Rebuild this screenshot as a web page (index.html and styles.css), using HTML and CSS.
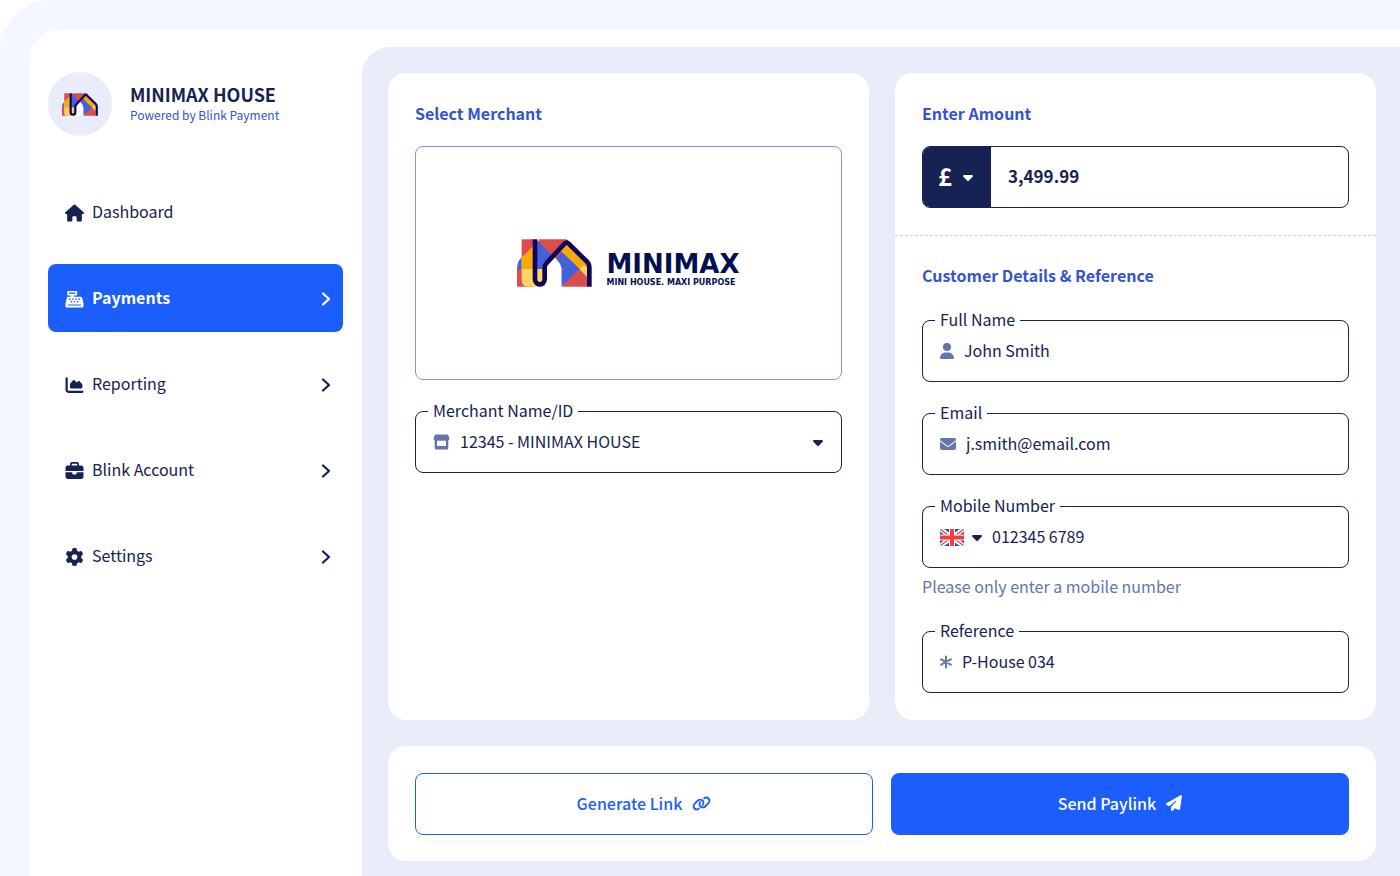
FILE: index.html
```html
<!DOCTYPE html>
<html lang="en">
<head>
<meta charset="utf-8">
<meta name="viewport" content="width=device-width, initial-scale=1">
<title>Minimax House - Payments</title>
<link rel="stylesheet" href="styles.css">
</head>
<body>
<svg class="sprite" aria-hidden="true">
  <symbol id="mark" viewBox="0 0 225 142">
    <path fill="#dd4d4b" d="M14 0h34v22L14 56zM0 89h48v53H0z"/>
    <path fill="#4361d8" d="M14 54v35H0q0-23 14-35z"/>
    <path fill="#fba706" d="M14 55l34-34v68H14z"/>
    <path fill="#fed563" d="M14 89h69v53H34q-20 0-20-20z"/>
    <path fill="#dd4d4b" d="M66 0h83l17 16-50 50L62 12z"/>
    <path fill="#4361d8" d="M54 3h6l57 57 32-44 60 60-76 66V92q0-14-11-26l-10-11-29 30v4H54z"/>
    <path fill="#fff" d="M90 142V84l22-31 10 11q11 12 11 26v52z"/>
    <path fill="#fba706" d="M131 34l18-20 61 60v15l-22 0z"/>
    <path fill="#fed563" d="M188 90l13-12 9 8v28z"/>
    <path fill="#dd4d4b" d="M134 142l53-53 23 23v30z"/>
    <path fill="none" stroke="#0f065c" stroke-width="14" stroke-linejoin="round" d="M54 0v120c0 20 29 20 29 0V84q0-8 7-14l50-54q9-12 18 0l53 52q6 6 6 14v60"/>
  </symbol>
  <symbol id="caret" viewBox="0 0 320 192"><path d="M137.400 182.600c12.500 12.500 32.800 12.500 45.300 0l128-128c9.200-9.200 11.900-22.900 6.900-34.900S301 0 288 0H32C19 0 7.400 7.800 2.400 19.800s-2.200 25.700 6.900 34.900z"/></symbol>
  <symbol id="chevron" viewBox="0 0 10 16"><path fill="none" stroke="currentColor" stroke-width="2.300" stroke-linecap="round" stroke-linejoin="round" d="M2 2.500L8 8l-6 5.500"/></symbol>
</svg>
<div class="shell">
  <div class="window">
    <aside class="sidebar">
      <div class="brand">
        <span class="avatar"><svg class="avatar-mark"><use href="#mark"/></svg></span>
        <div>
          <div class="brand-name">MINIMAX HOUSE</div>
          <div class="brand-sub">Powered by Blink Payment</div>
        </div>
      </div>
      <nav class="nav">
        <a class="nav-item" href="#dashboard">
          <svg class="nav-icon" viewBox="0 0 576 512"><path d="M575.8 255.500c0 18-15 32.100-32 32.100h-32l.7 160.200c0 2.700-.2 5.400-.5 8.100V472c0 22.100-17.900 40-40 40H392c-22.100 0-40-17.900-40-40v-88c0-17.700-14.300-32-32-32h-64c-17.700 0-32 14.300-32 32v88c0 22.100-17.900 40-40 40h-80c-22.100 0-40-17.900-40-40V287.600H32c-18 0-32-14-32-32.100 0-9 3-17 10-24L266.400 8c7-7 15-8 22-8s15 2 21 7l255.400 224.500c8 7 12 15 11 24z"/></svg>
          <span class="nav-label">Dashboard</span>
        </a>
        <a class="nav-item nav-item-active" href="#payments" aria-current="page">
          <svg class="nav-icon" viewBox="0 0 20 20"><path fill-rule="evenodd" d="M3 1h9q1 0 1 1v3q0 1-1 1H9v1.500h8q1.200 0 1.500 1.200L20 15v3q0 1.500-1.500 1.500h-17Q0 19.500 0 18v-3l1.500-6.300Q1.800 7.500 3 7.500h3V6H3Q2 6 2 5V2q0-1 1-1zm.8 1.700v1.600h7.400V2.700zM4 9.500V11h1.500V9.500zm3.500 0V11H9V9.500zm3.500 0V11h1.500V9.500zm3.500 0V11H16V9.500zM5.700 12.300v1.500h1.500v-1.500zm3.500 0v1.500h1.500v-1.500zm3.500 0v1.500h1.500v-1.500zM2.800 16v1.300h14.400V16z"/></svg>
          <span class="nav-label">Payments</span>
          <svg class="chevron"><use href="#chevron"/></svg>
        </a>
        <a class="nav-item" href="#reporting">
          <svg class="nav-icon" viewBox="0 0 512 512"><path d="M64 64c0-17.700-14.300-32-32-32S0 46.300 0 64v336c0 44.200 35.800 80 80 80h400c17.700 0 32-14.300 32-32s-14.300-32-32-32H80c-8.800 0-16-7.200-16-16V64zm96 288h288c17.700 0 32-14.300 32-32v-68.200c0-7.600-2.700-15-7.700-20.800l-65.800-76.800c-12.100-14.200-33.700-15-46.900-1.800l-21 21c-10 10-26.400 9.200-35.400-1.600l-39.200-47c-12.600-15.100-35.700-15.400-48.700-.6L135.900 215c-5.100 5.800-7.900 13.300-7.900 21.100v84c0 17.700 14.300 32 32 32z"/></svg>
          <span class="nav-label">Reporting</span>
          <svg class="chevron"><use href="#chevron"/></svg>
        </a>
        <a class="nav-item" href="#account">
          <svg class="nav-icon" viewBox="0 0 512 512"><path d="M184 48h144c4.400 0 8 3.600 8 8v40H176V56c0-4.400 3.600-8 8-8zm-56 8v40H64c-35.300 0-64 28.700-64 64v96h512v-96c0-35.300-28.700-64-64-64h-64V56c0-30.900-25.100-56-56-56H184c-30.900 0-56 25.100-56 56zm384 232H320v32c0 17.700-14.300 32-32 32h-64c-17.700 0-32-14.300-32-32v-32H0v128c0 35.300 28.700 64 64 64h384c35.300 0 64-28.700 64-64V288z"/></svg>
          <span class="nav-label">Blink Account</span>
          <svg class="chevron"><use href="#chevron"/></svg>
        </a>
        <a class="nav-item" href="#settings">
          <svg class="nav-icon" viewBox="0 0 512 512"><path d="M495.900 166.600c3.200 8.700.5 18.400-6.400 24.600l-43.300 39.400c1.100 8.300 1.700 16.800 1.700 25.400s-.6 17.100-1.700 25.400l43.300 39.400c6.900 6.200 9.600 15.900 6.400 24.600-4.400 11.900-9.700 23.300-15.800 34.300l-4.700 8.100c-6.600 11-14 21.400-22.100 31.200-5.900 7.200-15.700 9.600-24.500 6.800l-55.700-17.700c-13.400 10.300-28.200 18.900-44 25.400l-12.500 57.100c-2 9.100-9 16.300-18.200 17.800-13.800 2.300-28 3.500-42.500 3.500s-28.700-1.200-42.500-3.500c-9.200-1.500-16.200-8.700-18.200-17.800l-12.500-57.100c-15.800-6.500-30.600-15.100-44-25.400l-55.600 17.800c-8.800 2.800-18.600.3-24.500-6.800-8.100-9.800-15.500-20.200-22.100-31.200l-4.700-8.100c-6.100-11-11.400-22.400-15.800-34.300-3.200-8.700-.5-18.400 6.400-24.600l43.300-39.400C64.600 273.100 64 264.600 64 256s.6-17.100 1.700-25.400l-43.300-39.400c-6.900-6.200-9.600-15.900-6.400-24.600 4.400-11.900 9.700-23.300 15.800-34.300l4.700-8.100c6.600-11 14-21.400 22.100-31.200 5.900-7.200 15.700-9.600 24.500-6.800l55.700 17.700c13.400-10.300 28.200-18.900 44-25.400l12.500-57.100c2-9.100 9-16.300 18.200-17.800C227.300 1.200 241.500 0 256 0s28.700 1.200 42.500 3.500c9.200 1.500 16.200 8.700 18.200 17.800l12.500 57.100c15.800 6.500 30.600 15.100 44 25.400l55.700-17.700c8.800-2.800 18.600-.3 24.500 6.800 8.100 9.800 15.500 20.200 22.100 31.200l4.700 8.100c6.100 11 11.400 22.400 15.800 34.300zM256 336a80 80 0 1 0 0-160 80 80 0 1 0 0 160z"/></svg>
          <span class="nav-label">Settings</span>
          <svg class="chevron"><use href="#chevron"/></svg>
        </a>
      </nav>
    </aside>

    <main class="main">
      <div class="columns">
        <section class="card">
          <div class="section">
            <h2 class="heading">Select Merchant</h2>
            <div class="merchant-logo">
              <svg class="merchant-mark"><use href="#mark"/></svg>
              <div class="wordmark">
                <div class="wordmark-name">MINIMAX</div>
                <div class="wordmark-tag">MINI HOUSE. MAXI PURPOSE</div>
              </div>
            </div>
            <div class="field">
              <label class="field-label" for="merchant">Merchant Name/ID</label>
              <svg class="field-icon field-icon-store" viewBox="0 0 17 16"><path fill-rule="evenodd" d="M3 .5h11q.8 0 1.200.7l1 2.300q.8 2.300-.9 3V14q0 1.500-1.500 1.500H3.200Q1.700 15.500 1.700 14V6.500q-1.700-.7-.9-3l1-2.300Q2.200.5 3 .5zM4 6.900v5h9v-5q-1 0-1.700-.7-.6.700-1.500.7t-1.300-.7q-.5.700-1.300.7t-1.500-.7Q5 6.900 4 6.900z"/></svg>
              <select class="control" id="merchant"><option>12345 - MINIMAX HOUSE</option></select>
              <svg class="caret"><use href="#caret"/></svg>
            </div>
          </div>
        </section>

        <section class="card">
          <div class="section">
            <h2 class="heading">Enter Amount</h2>
            <div class="amount">
              <div class="currency">
                <select class="currency-select" aria-label="Currency"><option>£</option></select>
                <svg class="caret"><use href="#caret"/></svg>
              </div>
              <input class="amount-input" type="text" inputmode="decimal" aria-label="Amount" value="3,499.99">
            </div>
          </div>
          <div class="section section-divided">
            <h2 class="heading">Customer Details &amp; Reference</h2>
            <div class="fields">
              <div class="field">
                <label class="field-label" for="name">Full Name</label>
                <svg class="field-icon field-icon-user" viewBox="0 0 448 512"><path d="M224 256a128 128 0 1 0 0-256 128 128 0 1 0 0 256zm-45.700 48C79.800 304 0 383.800 0 482.300 0 498.700 13.300 512 29.700 512h388.600c16.400 0 29.700-13.300 29.700-29.700 0-98.500-79.800-178.300-178.300-178.300h-91.400z"/></svg>
                <input class="control" id="name" type="text" value="John Smith">
              </div>
              <div class="field">
                <label class="field-label" for="email">Email</label>
                <svg class="field-icon" viewBox="0 0 512 512"><path d="M48 64C21.500 64 0 85.500 0 112c0 15.100 7.100 29.300 19.200 38.400l217.600 163.200c11.400 8.500 27 8.500 38.400 0l217.600-163.200c12.100-9.100 19.200-23.300 19.200-38.400 0-26.500-21.500-48-48-48H48zM0 176v208c0 35.300 28.700 64 64 64h384c35.300 0 64-28.700 64-64V176L294.400 339.200c-22.800 17.100-54 17.100-76.800 0L0 176z"/></svg>
                <input class="control" id="email" type="email" value="j.smith@email.com">
              </div>
              <div>
                <div class="field">
                  <label class="field-label" for="mobile">Mobile Number</label>
                  <button class="country" type="button" aria-label="Country code, United Kingdom">
                    <svg class="flag" viewBox="0 0 24 17">
                      <rect width="24" height="17" rx="1.500" fill="#fff"/>
                      <path fill="#2a50b0" d="M4 0h5v3.500zM15 0h5l-5 3.500zM0 2.500L4.500 6H0zM24 2.500L19.500 6H24zM4 17h5v-3.500zM15 17h5l-5-3.500zM0 14.500L4.500 11H0zM24 14.500L19.500 11H24z"/>
                      <path stroke="#fb3b3b" stroke-width="1.300" d="M.5.500L8 6M23.500.500L16 6M.5 16.500L8 11M23.500 16.500L16 11"/>
                      <path fill="#fff" d="M9 0h6v17H9zM0 5.500h24v6H0z"/>
                      <path fill="#fb3b3b" d="M10 0h4v17h-4zM0 6.500h24v4H0z"/>
                    </svg>
                    <svg class="caret"><use href="#caret"/></svg>
                  </button>
                  <input class="control" id="mobile" type="tel" value="012345 6789" aria-describedby="mobile-hint">
                </div>
                <p class="hint" id="mobile-hint">Please only enter a mobile number</p>
              </div>
              <div class="field">
                <label class="field-label" for="reference">Reference</label>
                <svg class="field-icon field-icon-star" viewBox="0 0 12 16"><path fill="none" stroke="currentColor" stroke-width="2" stroke-linecap="round" d="M6 2.500v11M1.200 5.300l9.600 5.400M10.800 5.300l-9.600 5.400"/></svg>
                <input class="control" id="reference" type="text" value="P-House 034">
              </div>
            </div>
          </div>
        </section>
      </div>

      <div class="card actions">
        <button class="button button-outline" type="button">Generate Link
          <svg class="link-icon" viewBox="0 0 640 512"><path d="M579.800 267.700c56.500-56.500 56.500-148 0-204.500-50-50-128.800-56.500-186.300-15.400l-1.600 1.100c-14.400 10.300-17.700 30.300-7.400 44.600s30.300 17.700 44.600 7.400l1.600-1.100c32.100-22.900 76-19.300 103.800 8.600 31.500 31.500 31.500 82.500 0 114L422.300 334.800c-31.500 31.500-82.500 31.500-114 0-27.900-27.900-31.500-71.800-8.600-103.800l1.100-1.600c10.300-14.400 6.900-34.400-7.400-44.600s-34.400-6.900-44.600 7.400l-1.100 1.600C206.500 251.200 213 330 263 380c56.500 56.500 148 56.500 204.500 0l112.300-112.300zM60.200 244.300c-56.500 56.500-56.500 148 0 204.500 50 50 128.800 56.500 186.300 15.400l1.600-1.100c14.400-10.300 17.700-30.300 7.400-44.600s-30.300-17.700-44.600-7.400l-1.600 1.100c-32.100 22.900-76 19.300-103.800-8.600C74 372 74 321 105.500 289.500l112.200-112.300c31.500-31.500 82.500-31.500 114 0 27.900 27.900 31.500 71.800 8.600 103.900l-1.100 1.600c-10.300 14.400-6.900 34.400 7.400 44.600s34.400 6.900 44.600-7.400l1.100-1.600C433.500 260.800 427 182 377 132c-56.500-56.500-148-56.500-204.500 0L60.200 244.300z"/></svg>
        </button>
        <button class="button button-solid" type="button">Send Paylink
          <svg class="send-icon" viewBox="0 0 512 512"><path d="M498.100 5.600c10.100 7 15.400 19.100 13.500 31.200l-64 416c-1.500 9.700-7.400 18.200-16 23s-18.900 5.400-28 1.600L284 427.700l-68.500 74.100c-8.900 9.700-22.900 12.900-35.200 8.100S160 493.200 160 480v-83.600c0-4 1.500-7.800 4.200-10.700l167.600-182.900c5.800-6.300 5.600-16-.4-22s-15.700-6.400-22-.7L106 360.800l-88.300-44.200C7.100 311.300.3 300.700 0 288.900s5.900-22.800 16.100-28.700l448-256c10.700-6.100 23.900-5.500 34 1.400z"/></svg>
        </button>
      </div>
    </main>
  </div>
</div>
</body>
</html>
```
FILE: styles.css
```css
:root {
  --navy: #162253;
  --blue: #1b5efb;
  --heading: #3254cf;
  --muted: #6474ad;
  --panel: #e9edfa;
}

* { box-sizing: border-box; }

body {
  margin: 0;
  background: #fff;
  color: var(--navy);
  font-family: "Noto Sans CJK SC", "Open Sans", sans-serif;
  font-size: 16px;
  line-height: 24px;
}

button, input, select {
  margin: 0;
  padding: 0;
  border: 0;
  background: none;
  color: inherit;
  font: inherit;
}

select { appearance: none; }
svg { display: block; flex: none; fill: currentColor; }
.sprite { position: absolute; width: 0; height: 0; }

.shell {
  display: flex;
  min-height: 100vh;
  padding: 30px 0 0 30px;
  border-top-left-radius: 52px;
  background: #f4f7ff;
}

.window {
  display: flex;
  flex: 1;
  min-width: 0;
  border-top-left-radius: 28px;
  background: #fff;
}

.sidebar {
  flex: none;
  width: 332px;
  padding: 42px 19px 0 18px;
}

.brand { display: flex; align-items: center; gap: 18px; }
.avatar {
  display: flex;
  align-items: center;
  justify-content: center;
  width: 64px;
  height: 64px;
  border-radius: 50%;
  background: var(--panel);
}
.avatar-mark { width: 36px; height: 23px; }
.brand-name { font-size: 18px; font-weight: 700; line-height: 22px; }
.brand-sub { color: var(--heading); font-size: 12px; line-height: 20px; }

.nav { display: flex; flex-direction: column; gap: 18px; margin-top: 42px; }
.nav-item {
  display: flex;
  align-items: center;
  gap: 8px;
  height: 68px;
  padding: 1px 12px 0 17px;
  border-radius: 8px;
  color: var(--navy);
  text-decoration: none;
}
.nav-item-active { background: var(--blue); color: #fff; font-weight: 700; }
.nav-icon { width: 19px; height: 18px; }
.nav-label { flex: 1; padding-bottom: 3px; }
.chevron { width: 10px; height: 16px; }

.main {
  display: flex;
  flex: 1;
  flex-direction: column;
  gap: 26px;
  min-width: 0;
  margin-top: 17px;
  padding: 26px 24px 15px 26px;
  border-top-left-radius: 28px;
  background: var(--panel);
}

.columns {
  display: grid;
  grid-template-columns: repeat(2, minmax(0, 1fr));
  gap: 26px;
}
.card { border-radius: 18px; background: #fff; }
.section { padding: 27px; }
.section-divided { padding-top: 26px; border-top: 1px dashed #c3cdf0; }
.heading {
  margin: 0 0 20px;
  color: var(--heading);
  font-size: 16px;
  font-weight: 700;
  line-height: 26px;
}
.section-divided .heading { margin-bottom: 32px; }

.merchant-logo {
  display: flex;
  align-items: center;
  justify-content: center;
  gap: 14px;
  height: 234px;
  margin-bottom: 31px;
  border: 1px solid #7b96e6;
  border-radius: 8px;
}
.merchant-mark { width: 75px; height: 48px; }
.wordmark {
  padding-top: 14px;
  color: #02104f;
  font-family: "DejaVu Sans", sans-serif;
  font-weight: 700;
}
.wordmark-name { font-size: 26px; line-height: 26px; }
.wordmark-tag { font-size: 8px; line-height: 12px; }

.fields { display: flex; flex-direction: column; gap: 31px; }
.field {
  position: relative;
  display: flex;
  align-items: center;
  gap: 10px;
  height: 62px;
  padding: 0 18px 0 17px;
  border: 1px solid var(--navy);
  border-radius: 8px;
}
.field-label {
  position: absolute;
  top: -14px;
  left: 12px;
  padding: 0 5px;
  background: #fff;
}
.field-icon { width: 16px; height: 16px; color: var(--muted); }
.field-icon-store { width: 17px; }
.field-icon-user { width: 14px; }
.field-icon-star { width: 12px; }
.control { flex: 1; min-width: 0; height: 40px; padding-bottom: 2px; }
.caret { width: 10px; height: 6px; margin-top: 2px; }
.country { display: flex; align-items: center; gap: 8px; }
.flag { width: 24px; height: 17px; }
.hint { margin: 6px 0 2px; color: var(--muted); }

.amount {
  display: flex;
  height: 62px;
  overflow: hidden;
  border: 1px solid var(--navy);
  border-radius: 8px;
}
.currency {
  display: flex;
  align-items: center;
  gap: 10px;
  padding: 0 18px 0 15px;
  background: var(--navy);
  color: #fff;
}
.currency-select {
  width: 15px;
  height: 40px;
  padding-bottom: 2px;
  font-size: 24px;
  font-weight: 700;
}
.currency-select option { color: var(--navy); }
.amount-input {
  flex: 1;
  min-width: 0;
  padding: 0 17px 2px;
  font-size: 17px;
  font-weight: 700;
}

.actions {
  display: grid;
  grid-template-columns: repeat(2, minmax(0, 1fr));
  gap: 18px;
  padding: 27px 27px 26px;
}
.button {
  display: flex;
  align-items: center;
  justify-content: center;
  gap: 10px;
  height: 62px;
  padding-bottom: 2px;
  border: 1px solid var(--blue);
  border-radius: 8px;
  font-weight: 500;
}
.button-outline { color: var(--blue); }
.button-solid { background: var(--blue); color: #fff; }
.link-icon { width: 19px; height: 15px; }
.send-icon { width: 16px; height: 16px; }
```
